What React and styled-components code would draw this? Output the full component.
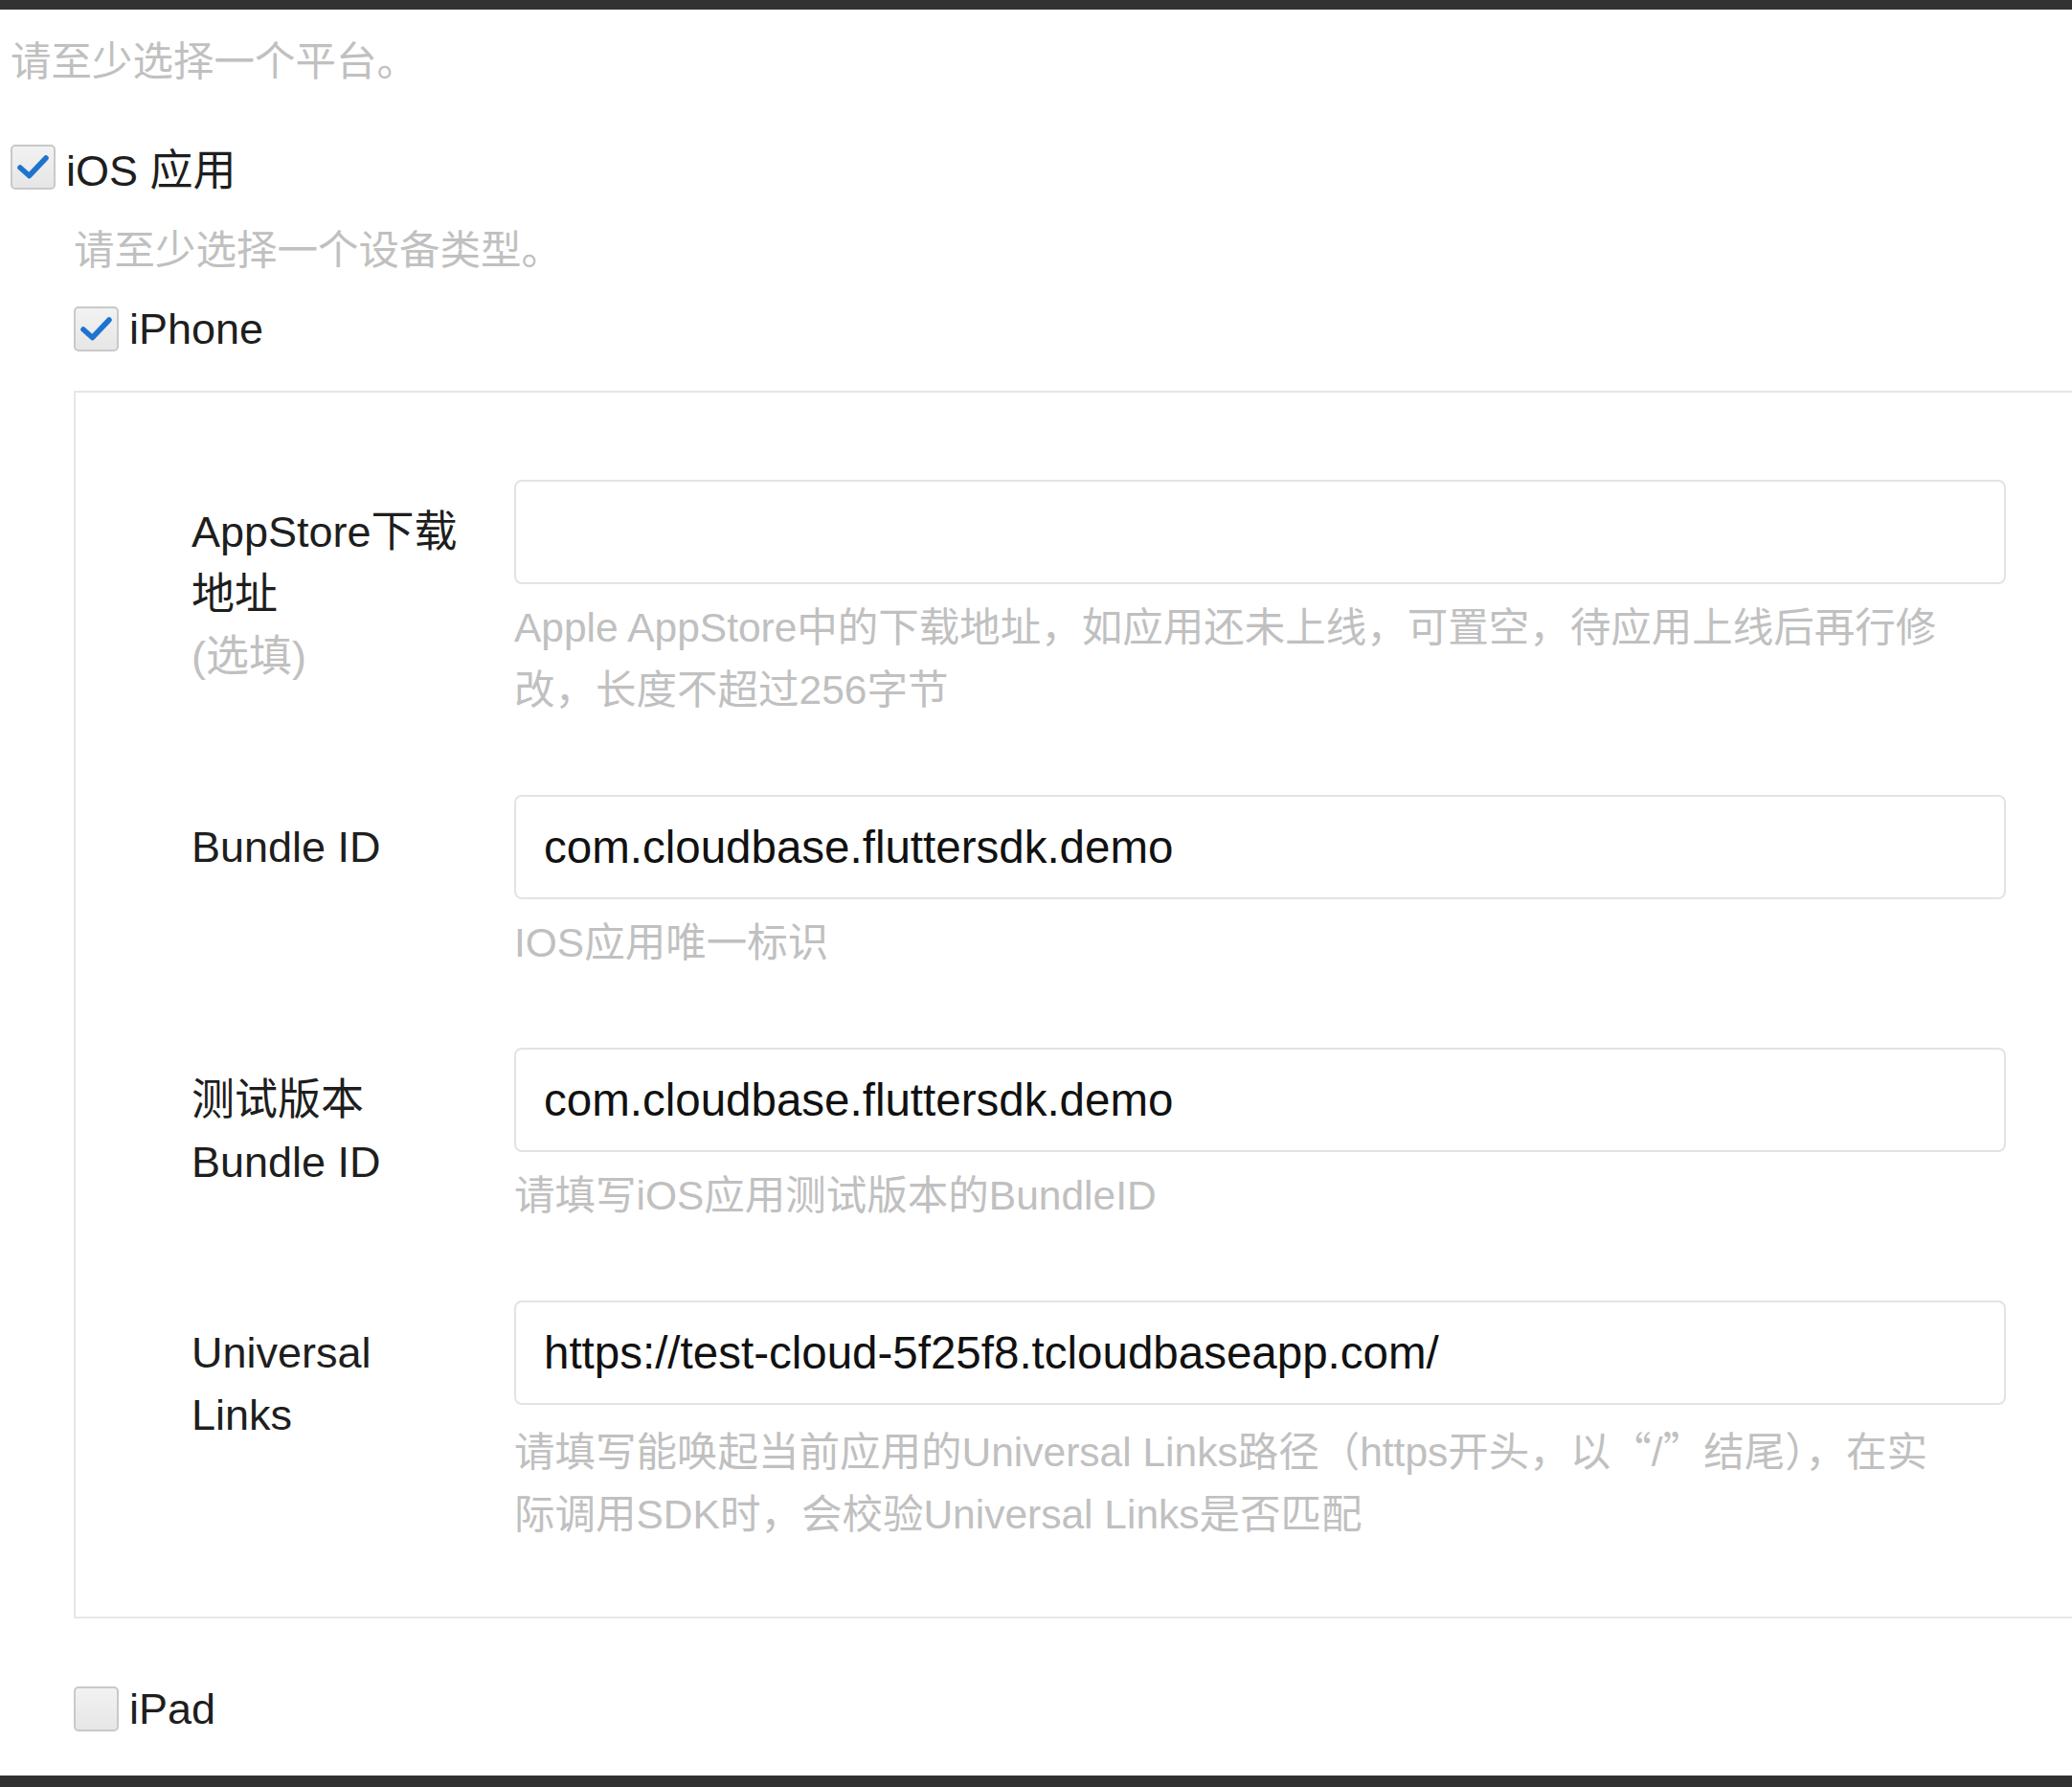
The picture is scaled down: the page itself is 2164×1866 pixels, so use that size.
import React from "react";
import styled, { createGlobalStyle } from "styled-components";

const Global = createGlobalStyle`
  html, body { margin: 0; padding: 0; background: #fff; }
  body { font-family: "Liberation Sans", "Noto Sans CJK SC", sans-serif; }
  * { box-sizing: border-box; }
`;

const Page = styled.div`
  width: 2164px;
  height: 1866px;
  overflow: hidden;
  display: flex;
  flex-direction: column;
  background: #fff;
`;

const Bar = styled.div`
  flex: none;
  height: ${(p) => p.$h}px;
  background: #323232;
`;

const Content = styled.div`
  flex: 1;
  padding-left: 11px;
  display: flex;
  flex-direction: column;
`;

const Hint = styled.div`
  margin-top: 22px;
  font-size: 42.5px;
  line-height: 65px;
  color: #c0c0c0;
  white-space: nowrap;
`;

const CheckRow = styled.label`
  margin-top: ${(p) => p.$mt}px;
  height: 65px;
  display: flex;
  align-items: center;
  gap: 11px;
  font-size: 45px;
  color: #1e1e1e;
`;

const Box = styled.span`
  flex: none;
  width: 47px;
  height: 47px;
  border: 2px solid #c9c9c9;
  border-radius: 5px;
  background: linear-gradient(#f2f2f2, #e6e6e6);
  display: flex;
  align-items: center;
  justify-content: center;
`;

const Devices = styled.div`
  margin-left: 66px;
  display: flex;
  flex-direction: column;
`;

const Panel = styled.div`
  margin-top: 32px;
  margin-right: -40px;
  border: 2px solid #e6e6e6;
  padding: 91px 0 0 121px;
`;

const Row = styled.div`
  display: grid;
  grid-template-columns: 290px 1558px;
  column-gap: 47px;
  margin-bottom: 77px;
  &:last-child {
    margin-bottom: 74px;
  }
`;

const Label = styled.div`
  padding-top: 22px;
  font-size: 45px;
  line-height: 65px;
  color: #1e1e1e;
`;

const Optional = styled.div`
  color: #c0c0c0;
`;

const Field = styled.div`
  display: flex;
  flex-direction: column;
`;

const Input = styled.input`
  width: 100%;
  height: 109px;
  border: 2px solid #e3e3e3;
  border-radius: 8px;
  padding: 0 29px;
  font-family: "Liberation Sans", "Noto Sans CJK SC", sans-serif;
  font-size: 47.5px;
  color: #111;
  background: #fff;
  outline: none;
`;

const Help = styled.div`
  margin-top: 13px;
  font-size: 42.5px;
  line-height: 65px;
  color: #c0c0c0;
`;

const Wide = styled.span`
  font-family: "Noto Sans CJK SC", sans-serif;
`;

function Check({ checked }) {
  return (
    <Box>
      {checked && (
        <svg width="36" height="30" viewBox="0 0 36 30">
          <path
            d="M4 15 L13.5 23.5 L31 5"
            fill="none"
            stroke="#1d74cf"
            strokeWidth="5.5"
            strokeLinecap="round"
            strokeLinejoin="round"
          />
        </svg>
      )}
    </Box>
  );
}

const rows = [
  {
    label: (
      <>
        AppStore下载地址
        <Optional>(选填)</Optional>
      </>
    ),
    value: "",
    help: "Apple AppStore中的下载地址，如应用还未上线，可置空，待应用上线后再行修改，长度不超过256字节",
  },
  {
    label: "Bundle ID",
    value: "com.cloudbase.fluttersdk.demo",
    help: "IOS应用唯一标识",
  },
  {
    label: "测试版本 Bundle ID",
    value: "com.cloudbase.fluttersdk.demo",
    help: "请填写iOS应用测试版本的BundleID",
  },
  {
    label: "Universal Links",
    value: "https://test-cloud-5f25f8.tcloudbaseapp.com/",
    help: (
      <>
        请填写能唤起当前应用的Universal Links路径（https开头，以<Wide>“</Wide>/<Wide>”</Wide>结尾），在实
        <br />
        际调用SDK时，会校验Universal Links是否匹配
      </>
    ),
  },
];

export default function App() {
  return (
    <Page>
      <Global />
      <Bar $h={10} />
      <Content>
        <Hint>请至少选择一个平台。</Hint>
        <CheckRow $mt={45}>
          <Check checked />
          iOS 应用
        </CheckRow>
        <Devices>
          <Hint>请至少选择一个设备类型。</Hint>
          <CheckRow $mt={17}>
            <Check checked />
            iPhone
          </CheckRow>
          <Panel>
            {rows.map((r, i) => (
              <Row key={i}>
                <Label>{r.label}</Label>
                <Field>
                  <Input defaultValue={r.value} />
                  <Help>{r.help}</Help>
                </Field>
              </Row>
            ))}
          </Panel>
          <CheckRow $mt={62}>
            <Check />
            iPad
          </CheckRow>
        </Devices>
      </Content>
      <Bar $h={12} />
    </Page>
  );
}
